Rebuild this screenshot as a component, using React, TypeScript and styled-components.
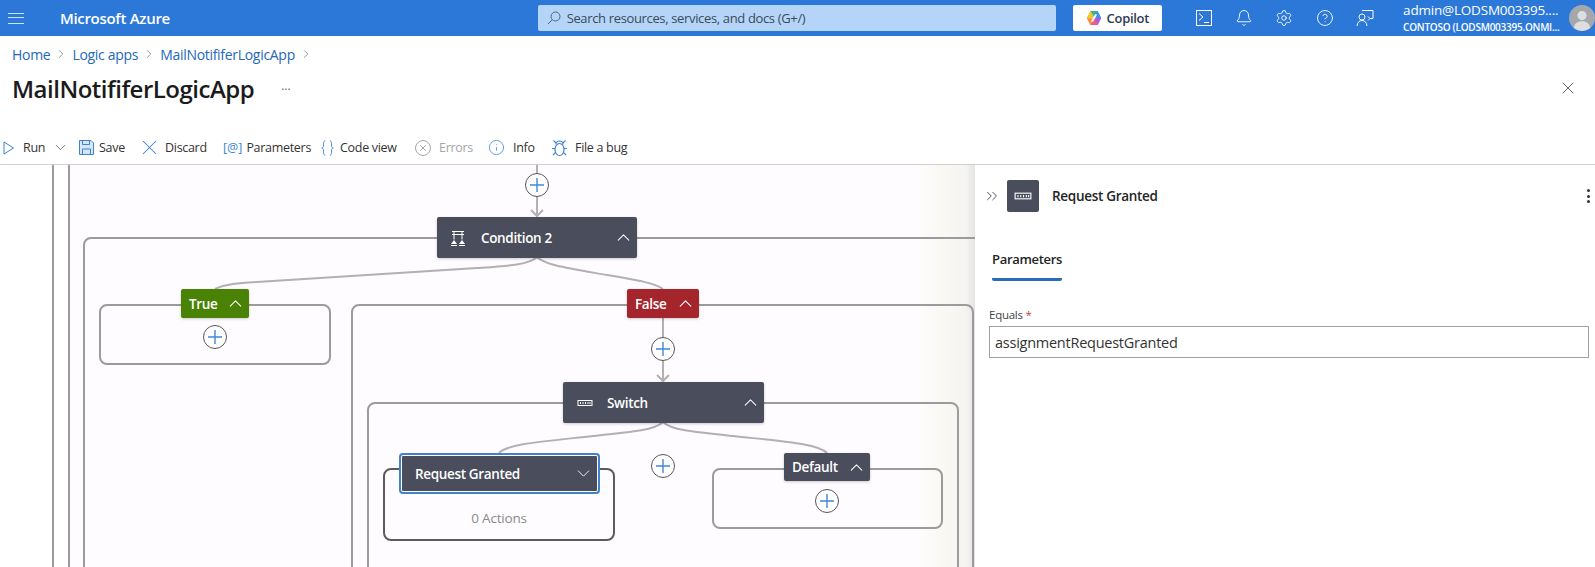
import React from 'react';
import styled, { createGlobalStyle } from 'styled-components';
import { Bell, ChevronDown, ChevronRight, ChevronUp, ChevronsRight, CircleHelp, Info, Settings, X } from 'lucide-react';

const FONT = '"Open Sans", "Noto Sans", sans-serif';
const BLUE = '#2b78d8';
const LINK = '#2468b8';
const NODE = '#4a4d5c';
const EDGE = '#b3afb3';
const SCOPE = '#9c9a9c';

const GlobalStyle = createGlobalStyle`
  html, body {
    margin: 0;
    padding: 0;
    background: #fff;
    overflow: hidden;
  }
  body {
    font-family: ${FONT};
    color: #242424;
  }
`;

const Page = styled.div`
  width: 1595px;
  height: 567px;
  display: flex;
  flex-direction: column;
  overflow: hidden;
`;

const TopBar = styled.header`
  height: 36px;
  flex: none;
  background: ${BLUE};
  color: #fff;
  display: flex;
  align-items: center;
`;

const MenuButton = styled.div`
  width: 16px;
  height: 11px;
  margin-left: 8px;
  border-top: 1.5px solid #cfe2f8;
  border-bottom: 1.5px solid #cfe2f8;
  position: relative;
  box-sizing: border-box;
  &::after {
    content: '';
    position: absolute;
    left: 0;
    right: 0;
    top: 3.2px;
    height: 1.5px;
    background: #cfe2f8;
  }
`;

const Brand = styled.div`
  margin-left: 36px;
  width: 481px;
  font-size: 15px;
  font-weight: 600;
  letter-spacing: -0.3px;
`;

const SearchBox = styled.div`
  width: 522px;
  height: 26px;
  background: #b4d5f7;
  border-radius: 2px;
  display: flex;
  align-items: center;
  gap: 6px;
  padding-left: 9px;
  box-sizing: border-box;
  font-size: 13px;
  letter-spacing: -0.35px;
  color: #3b4a5c;
`;

const CopilotButton = styled.div`
  width: 89px;
  height: 26px;
  margin-left: 17px;
  background: #fff;
  border-radius: 2px;
  display: flex;
  align-items: center;
  justify-content: center;
  gap: 5px;
  color: #2b3a55;
  font-size: 13px;
  font-weight: 600;
  letter-spacing: -0.3px;
`;

const TopIcons = styled.div`
  margin-left: 32px;
  display: flex;
  gap: 20.4px;
  width: 211px;
  color: #fff;
`;

const TopIcon = styled.div`
  width: 20px;
  height: 20px;
  display: flex;
  align-items: center;
  justify-content: center;
`;

const Account = styled.div`
  width: 164px;
  line-height: 1;
  display: flex;
  flex-direction: column;
  gap: 5px;
`;

const AccountName = styled.div`
  font-size: 13.5px;
  letter-spacing: -0.2px;
`;

const AccountOrg = styled.div`
  font-size: 10px;
  font-weight: 600;
  letter-spacing: -0.25px;
`;

const Avatar = styled.div`
  width: 26px;
  height: 26px;
  flex: none;
  margin-left: 3px;
  display: flex;
`;

const Crumbs = styled.nav`
  height: 20px;
  margin-top: 8px;
  padding-left: 12px;
  display: flex;
  align-items: center;
  font-size: 14px;
  letter-spacing: -0.3px;
  color: ${LINK};
`;

const CrumbGap = styled.span`
  width: 22px;
  display: flex;
  justify-content: center;
  color: #555;
`;

const TitleRow = styled.div`
  height: 36px;
  margin-top: 6px;
  padding: 0 17px 0 12px;
  display: flex;
  align-items: center;
`;

const Title = styled.h1`
  margin: 0;
  font-size: 24px;
  font-weight: 600;
  letter-spacing: -0.5px;
  color: #1b1b1b;
`;

const TitleDots = styled.span`
  margin-left: 27px;
  font-size: 12px;
  color: #666;
  position: relative;
  top: -3px;
`;

const CloseButton = styled.div`
  margin-left: auto;
  display: flex;
  color: #444;
`;

const Toolbar = styled.div`
  height: 36px;
  margin-top: 23px;
  flex: none;
  box-sizing: border-box;
  border-bottom: 1.5px solid #cfcfcf;
  padding-top: 2px;
  display: flex;
  align-items: center;
  font-size: 12.5px;
  letter-spacing: -0.3px;
  color: #333;
`;

const ToolItem = styled.div<{ $w: number; $gap: number; $off?: boolean }>`
  width: ${(p) => p.$w}px;
  flex: none;
  display: flex;
  align-items: center;
  gap: ${(p) => p.$gap}px;
  color: ${(p) => (p.$off ? '#a6a6a6' : '#333')};
`;

const ToolIcon = styled.span<{ $off?: boolean }>`
  display: flex;
  color: ${(p) => (p.$off ? '#a6a6a6' : '#3f83cf')};
`;

const AtIcon = styled.span`
  color: #3f83cf;
  font-size: 12.5px;
  letter-spacing: 0;
`;

const Workspace = styled.div`
  flex: 1;
  display: flex;
  min-height: 0;
`;

const Canvas = styled.div`
  width: 975px;
  flex: none;
  position: relative;
  overflow: hidden;
  background: linear-gradient(
    to right,
    #fff 0,
    #fff 68px,
    #fefcfe 70px,
    #fefcfe 915px,
    #fbf9f4 940px,
    #f5f4f2 966px,
    #e4e4e4 975px
  );
`;

const Lanes = styled.svg`
  position: absolute;
  left: 0;
  top: 0;
`;

const Scope = styled.div<{ $x: number; $y: number; $w: number; $h: number; $dark?: boolean }>`
  position: absolute;
  left: ${(p) => p.$x}px;
  top: ${(p) => p.$y}px;
  width: ${(p) => p.$w}px;
  height: ${(p) => p.$h}px;
  box-sizing: border-box;
  border: 2px solid ${(p) => (p.$dark ? '#5c5a5e' : SCOPE)};
  border-radius: 8px;
`;

const ActionCount = styled.div`
  position: absolute;
  left: 383px;
  width: 232px;
  top: 344px;
  text-align: center;
  font-size: 13.5px;
  letter-spacing: -0.2px;
  color: #8a8a8a;
`;

const Node = styled.div<{ $x: number; $y: number; $w: number; $h: number; $bg?: string; $pad: number; $active?: boolean }>`
  position: absolute;
  left: ${(p) => p.$x}px;
  top: ${(p) => p.$y}px;
  width: ${(p) => p.$w}px;
  height: ${(p) => p.$h}px;
  box-sizing: border-box;
  background: ${(p) => p.$bg || NODE};
  border-radius: 2px;
  box-shadow: ${(p) =>
    p.$active ? `inset 0 0 0 1px #fff, 0 0 0 2px #3f83c9` : '0 1px 3px rgba(0, 0, 0, 0.2)'};
  padding: 0 ${(p) => (p.$active ? 4 : 3)}px 0 ${(p) => p.$pad}px;
  display: flex;
  align-items: center;
  color: #fff;
  font-size: 13.5px;
  font-weight: 600;
  letter-spacing: -0.35px;
`;

const NodeIcon = styled.span<{ $w: number }>`
  width: ${(p) => p.$w}px;
  flex: none;
  display: flex;
`;

const NodeChevron = styled.span`
  margin-left: auto;
  display: flex;
  color: #f7f7f7;
`;

const AddButton = styled.div<{ $x: number; $y: number }>`
  position: absolute;
  left: ${(p) => p.$x - 12}px;
  top: ${(p) => p.$y - 12}px;
  width: 24px;
  height: 24px;
  box-sizing: border-box;
  border: 1px solid #55555a;
  border-radius: 50%;
  background: #fff;
  display: flex;
  align-items: center;
  justify-content: center;
`;

const Panel = styled.aside`
  flex: 1;
  box-sizing: border-box;
  background: #fff;
  padding: 15px 5px 0 14px;
`;

const PanelHead = styled.div`
  display: flex;
  align-items: center;
  height: 32px;
`;

const CollapseButton = styled.span`
  width: 24px;
  margin-left: -6px;
  display: flex;
  color: #444;
`;

const PanelTile = styled.div`
  width: 32px;
  height: 32px;
  flex: none;
  border-radius: 2px;
  background: ${NODE};
  display: flex;
  align-items: center;
  justify-content: center;
`;

const PanelTitle = styled.div`
  margin-left: 13px;
  font-size: 13.5px;
  font-weight: 600;
  letter-spacing: -0.3px;
`;

const PanelMenu = styled.div`
  margin-left: auto;
  display: flex;
  flex-direction: column;
  gap: 2.5px;
  span {
    width: 3px;
    height: 3px;
    border-radius: 50%;
    background: #333;
  }
`;

const Tabs = styled.div`
  margin-top: 38px;
  margin-left: 3px;
  display: flex;
`;

const Tab = styled.div`
  font-size: 13px;
  font-weight: 600;
  letter-spacing: -0.3px;
  padding-bottom: 10px;
  border-bottom: 3px solid #2b6cb8;
  border-radius: 0 0 2px 2px;
`;

const FieldLabel = styled.label`
  display: block;
  margin-top: 26px;
  margin-bottom: 4px;
  font-size: 11.5px;
  letter-spacing: -0.25px;
  color: #444;
  em {
    color: #b4474c;
    font-style: normal;
  }
`;

const FieldInput = styled.div`
  width: 600px;
  height: 32px;
  box-sizing: border-box;
  border: 1px solid #a0a0a0;
  padding-left: 5px;
  display: flex;
  align-items: center;
  font-size: 14.5px;
  letter-spacing: -0.25px;
  color: #333;
`;

const Plus = () => (
  <svg width="16" height="16" viewBox="0 0 16 16">
    <path d="M8 1v14M1 8h14" stroke="#3f88d8" strokeWidth="1.4" />
  </svg>
);

const SwitchGlyph = ({ size = 16 }: { size?: number }) => (
  <svg width={size} height={size} viewBox="0 0 16 16" fill="none">
    <rect x="1" y="5.5" width="14" height="5" stroke="#fff" strokeWidth="1" />
    <path d="M3.5 7v2M6 7v2M8.5 7v2M11 7v2M13 7v2" stroke="#fff" strokeWidth="1" />
  </svg>
);

const ConditionGlyph = () => (
  <svg width="14" height="16" viewBox="0 0 14 16" fill="none" stroke="#fff">
    <path d="M1 1.5h12M3 1.5v8M11 1.5v8M1 4.5h12" strokeWidth="1" />
    <path d="M0 14l3-4 3 4zM8 14l3-4 3 4z" fill="#fff" stroke="none" />
    <path d="M0 15.5h6M8 15.5h6" strokeWidth="1" />
  </svg>
);

const CopilotLogo = () => (
  <svg width="16" height="16" viewBox="0 0 16 16" strokeLinejoin="round" strokeWidth="1">
    <path d="M8 8L4.500 1.500h7z" fill="#35b58f" stroke="#35b58f" />
    <path d="M8 8l3.500-6.500L14.800 8z" fill="#3f8ff0" stroke="#3f8ff0" />
    <path d="M8 8h6.800l-3.300 6.500z" fill="#a45ee0" stroke="#a45ee0" />
    <path d="M8 8l3.500 6.500h-7z" fill="#ee5c8f" stroke="#ee5c8f" />
    <path d="M8 8l-3.500 6.500L1.200 8z" fill="#f5913a" stroke="#f5913a" />
    <path d="M8 8H1.200l3.300-6.500z" fill="#f2c832" stroke="#f2c832" />
    <path d="M9.800 5L6.200 11" stroke="#fff" strokeWidth="2" strokeLinecap="round" />
  </svg>
);

const AVATAR_PATH = 'M13 6a4.6 4.6 0 1 1 0 9.2A4.6 4.6 0 0 1 13 6zM4.8 23c.6-4.6 3.6-6.8 8.2-6.8s7.6 2.2 8.2 6.8A13 13 0 0 1 13 26a13 13 0 0 1-8.200-3z';

const App = () => (
  <>
    <GlobalStyle />
    <Page>
      <TopBar>
        <MenuButton />
        <Brand>Microsoft Azure</Brand>
        <SearchBox>
          <svg width="14" height="14" viewBox="0 0 14 14" fill="none" stroke="#47668a">
            <circle cx="8.500" cy="5.500" r="4.500" />
            <path d="M5.300 8.700L1 13" />
          </svg>
          Search resources, services, and docs (G+/)
        </SearchBox>
        <CopilotButton>
          <CopilotLogo />
          Copilot
        </CopilotButton>
        <TopIcons>
          <TopIcon>
            <svg width="16" height="16" viewBox="0 0 16 16" fill="none" stroke="currentColor">
              <rect x="0.500" y="0.500" width="15" height="15" />
              <path d="M3 3.500L7 7l-4 3.500M8 12.500h5" />
            </svg>
          </TopIcon>
          <TopIcon>
            <Bell size={18} strokeWidth={1.2} />
          </TopIcon>
          <TopIcon>
            <Settings size={18} strokeWidth={1.2} />
          </TopIcon>
          <TopIcon>
            <CircleHelp size={18} strokeWidth={1.2} />
          </TopIcon>
          <TopIcon>
            <svg width="18" height="18" viewBox="0 0 18 18" fill="none" stroke="currentColor">
              <circle cx="6" cy="8" r="3" />
              <path d="M1 17c.5-3.500 2-5.500 5-5.500s4.500 2 5 5.500M6 1.500h11v8h-3M14 9.500l-2-2m2 2l-2 2" />
            </svg>
          </TopIcon>
        </TopIcons>
        <Account>
          <AccountName>admin@LODSM003395....</AccountName>
          <AccountOrg>CONTOSO (LODSM003395.ONMI...</AccountOrg>
        </Account>
        <Avatar>
          <svg width="26" height="26" viewBox="0 0 26 26">
            <circle cx="13" cy="13" r="13" fill="#a4a8ad" />
            <path d={AVATAR_PATH} fill="#dcdee0" />
          </svg>
        </Avatar>
      </TopBar>

      <Crumbs>
        Home
        <CrumbGap><ChevronRight size={14} strokeWidth={1} /></CrumbGap>
        Logic apps
        <CrumbGap><ChevronRight size={14} strokeWidth={1} /></CrumbGap>
        MailNotififerLogicApp
        <CrumbGap><ChevronRight size={14} strokeWidth={1} /></CrumbGap>
      </Crumbs>

      <TitleRow>
        <Title>MailNotififerLogicApp</Title>
        <TitleDots>...</TitleDots>
        <CloseButton><X size={20} strokeWidth={1} /></CloseButton>
      </TitleRow>

      <Toolbar>
        <ToolItem $w={79} $gap={7}>
          <ToolIcon>
            <svg width="14" height="14" viewBox="0 0 14 14" fill="none" stroke="currentColor" style={{ marginLeft: 2 }}>
              <path d="M2 1l9.500 6L2 13z" />
            </svg>
          </ToolIcon>
          Run
          <ChevronDown size={17} strokeWidth={1} color="#444" />
        </ToolItem>
        <ToolItem $w={62} $gap={5}>
          <ToolIcon>
            <svg width="15" height="15" viewBox="0 0 15 15" fill="none" stroke="currentColor">
              <path d="M.500.500h11.500l2.500 2.500v11.500H.500z" fill="#d5e6f8" />
              <path d="M3.500.500v4h7v-4M3.500 14.500v-5.500h8v5.500" />
            </svg>
          </ToolIcon>
          Save
        </ToolItem>
        <ToolItem $w={82} $gap={7}>
          <ToolIcon><X size={25} strokeWidth={1} style={{ margin: '0 -4px' }} /></ToolIcon>
          Discard
        </ToolItem>
        <ToolItem $w={97} $gap={4}>
          <AtIcon>[@]</AtIcon>
          Parameters
        </ToolItem>
        <ToolItem $w={95} $gap={5}>
          <ToolIcon>
            <svg width="15" height="16" viewBox="0 0 15 18" fill="none" stroke="currentColor">
              <path d="M5 1C3 1 3 2 3 4v3c0 1-1 2-2 2 1 0 2 1 2 2v3c0 2 0 3 2 3M10 1c2 0 2 1 2 3v3c0 1 1 2 2 2-1 0-2 1-2 2v3c0 2 0 3-2 3" />
            </svg>
          </ToolIcon>
          Code view
        </ToolItem>
        <ToolItem $w={73} $gap={8} $off>
          <ToolIcon $off>
            <svg width="16" height="16" viewBox="0 0 16 16" fill="none" stroke="currentColor">
              <circle cx="8" cy="8" r="7.500" />
              <path d="M5.200 5.200l5.600 5.600M10.800 5.200l-5.600 5.600" />
            </svg>
          </ToolIcon>
          Errors
        </ToolItem>
        <ToolItem $w={64} $gap={8}>
          <ToolIcon><Info size={17} strokeWidth={1.1} /></ToolIcon>
          Info
        </ToolItem>
        <ToolItem $w={90} $gap={8}>
          <ToolIcon>
            <svg width="15" height="18" viewBox="0 0 15 18" fill="none" stroke="currentColor">
              <ellipse cx="7.500" cy="10.500" rx="4.500" ry="6" strokeWidth="1.200" />
              <path d="M4 5.500c0-2 1.500-3.500 3.500-3.500S11 3.500 11 5.500M1.500 1.500l3 3M13.500 1.500l-3 3M0 9.500h3M15 9.500h-3M1 16l2.500-2.500M14 16l-2.500-2.500" strokeWidth="1.100" />
            </svg>
          </ToolIcon>
          File a bug
        </ToolItem>
      </Toolbar>

      <Workspace>
        <Canvas>
          <Lanes width="975" height="402" viewBox="0 0 975 402" fill="none">
            <path d="M53 0v402M69 0v402" stroke={SCOPE} strokeWidth="2" />
            <path d="M537 0v51" stroke={EDGE} strokeWidth="2" />
            <path d="M531 45l6 6 6-6" stroke={EDGE} strokeWidth="2" />
            <path d="M663 153v63" stroke={EDGE} strokeWidth="2" />
            <path d="M657 210l6 6 6-6" stroke={EDGE} strokeWidth="2" />
            <path d="M537 92c-8 8-30 9-60 11l-220 14c-18 1-32 2-42 7" stroke={EDGE} strokeWidth="2" />
            <path d="M537 92c8 8 30 11 70 18 30 5 48 8 56 14" stroke={EDGE} strokeWidth="2" />
            <path d="M663 257c-8 8-30 10-70 14-55 6-85 8-94 17" stroke={EDGE} strokeWidth="2" />
            <path d="M663 257c8 8 30 10 70 14 55 6 85 8 94 17" stroke={EDGE} strokeWidth="2" />
          </Lanes>

          <Scope $x={83} $y={72} $w={1000} $h={500} />
          <Scope $x={99} $y={139} $w={232} $h={61} />
          <Scope $x={351} $y={139} $w={623} $h={500} />
          <Scope $x={367} $y={237} $w={592} $h={400} />
          <Scope $x={383} $y={303} $w={232} $h={73} $dark />
          <Scope $x={712} $y={303} $w={231} $h={61} />
          <ActionCount>0 Actions</ActionCount>

          <AddButton $x={537} $y={20}><Plus /></AddButton>
          <AddButton $x={215} $y={172}><Plus /></AddButton>
          <AddButton $x={663} $y={184}><Plus /></AddButton>
          <AddButton $x={663} $y={301}><Plus /></AddButton>
          <AddButton $x={827} $y={336}><Plus /></AddButton>

          <Node $x={437} $y={52} $w={200} $h={41} $pad={14}>
            <NodeIcon $w={30}><ConditionGlyph /></NodeIcon>
            Condition 2
            <NodeChevron><ChevronUp size={21} strokeWidth={1.3} /></NodeChevron>
          </Node>
          <Node $x={181} $y={124} $w={68} $h={29} $bg="#498205" $pad={8}>
            True
            <NodeChevron><ChevronUp size={21} strokeWidth={1.3} /></NodeChevron>
          </Node>
          <Node $x={627} $y={124} $w={72} $h={29} $bg="#a4262c" $pad={8}>
            False
            <NodeChevron><ChevronUp size={21} strokeWidth={1.3} /></NodeChevron>
          </Node>
          <Node $x={563} $y={217} $w={201} $h={41} $pad={14}>
            <NodeIcon $w={30}><SwitchGlyph /></NodeIcon>
            Switch
            <NodeChevron><ChevronUp size={21} strokeWidth={1.3} /></NodeChevron>
          </Node>
          <Node $x={401} $y={290} $w={197} $h={37} $pad={14} $active>
            Request Granted
            <NodeChevron><ChevronDown size={21} strokeWidth={1.1} /></NodeChevron>
          </Node>
          <Node $x={784} $y={288} $w={86} $h={28} $pad={8}>
            Default
            <NodeChevron><ChevronUp size={21} strokeWidth={1.3} /></NodeChevron>
          </Node>
        </Canvas>

        <Panel>
          <PanelHead>
            <CollapseButton><ChevronsRight size={18} strokeWidth={1.2} /></CollapseButton>
            <PanelTile><SwitchGlyph size={18} /></PanelTile>
            <PanelTitle>Request Granted</PanelTitle>
            <PanelMenu><span /><span /><span /></PanelMenu>
          </PanelHead>
          <Tabs><Tab>Parameters</Tab></Tabs>
          <FieldLabel>Equals <em>*</em></FieldLabel>
          <FieldInput>assignmentRequestGranted</FieldInput>
        </Panel>
      </Workspace>
    </Page>
  </>
);

export default App;
